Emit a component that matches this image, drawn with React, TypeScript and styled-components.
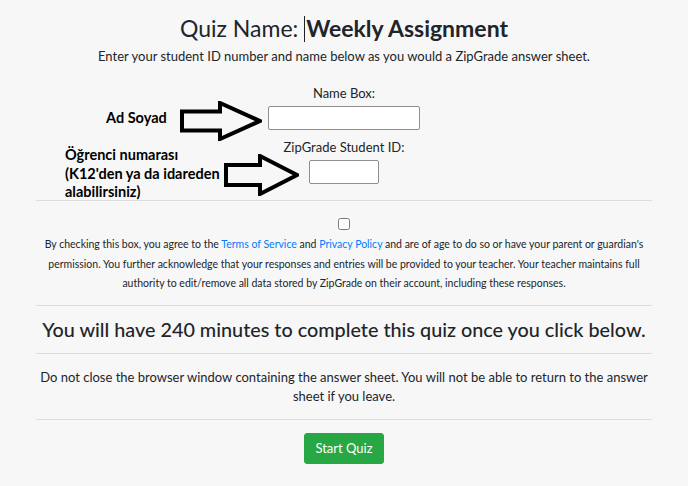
import styled, { createGlobalStyle } from 'styled-components';

const GlobalStyle = createGlobalStyle`
    body {
        margin: 0;
        background-color: #f7f7f7;
        font-family: Lato, 'Noto Sans', sans-serif;
        color: #212529;
    }
`;

const Arrow = ({ width, height, headStart }: { width: number; height: number; headStart: number }) => {
    const shaftTop = height * 0.26;
    const shaftBottom = height * 0.74;
    const mid = height / 2;
    return (
        <svg width={width} height={height} viewBox={`0 0 ${width} ${height}`}>
            <polygon
                points={`2,${shaftTop} ${headStart},${shaftTop} ${headStart},2 ${width - 2},${mid} ${headStart},${height - 2} ${headStart},${shaftBottom} 2,${shaftBottom}`}
                fill="none"
                stroke="#000"
                strokeWidth={4}
                strokeLinejoin="miter"
            />
        </svg>
    );
};

const App = () => {
    return (
        <>
            <GlobalStyle />
            <Page>
                <Container>
                    <Title>
                        Quiz Name: <Caret />
                        <strong>Weekly Assignment</strong>
                    </Title>
                    <Lead>Enter your student ID number and name below as you would a ZipGrade answer sheet.</Lead>

                    <FormBlock>
                        <FieldLabel>Name Box:</FieldLabel>
                        <TextInput $width={152} />
                        <FieldLabel $top={8}>ZipGrade Student ID:</FieldLabel>
                        <TextInput $width={70} />

                        {/* hand-drawn hints placed over the form */}
                        <Note $left={70} $top={43}>Ad Soyad</Note>
                        <ArrowSpot $left={144} $top={35}>
                            <Arrow width={82} height={40} headStart={40} />
                        </ArrowSpot>
                        <Note $left={29} $top={80}>
                            Öğrenci numarası
                            <br />
                            (K12'den ya da idareden
                            <br />
                            alabilirsiniz)
                        </Note>
                        <ArrowSpot $left={188} $top={88}>
                            <Arrow width={75} height={42} headStart={36} />
                        </ArrowSpot>
                    </FormBlock>

                    <Rule />

                    <Consent>
                        <CheckBox type="checkbox" />
                        <ConsentText>
                            By checking this box, you agree to the <Link href="#">Terms of Service</Link> and{' '}
                            <Link href="#">Privacy Policy</Link> and are of age to do so or have your parent or
                            guardian's permission. You further acknowledge that your responses and entries will be
                            provided to your teacher. Your teacher maintains full authority to edit/remove all data
                            stored by ZipGrade on their account, including these responses.
                        </ConsentText>
                    </Consent>

                    <Rule />
                    <TimeHeading>You will have 240 minutes to complete this quiz once you click below.</TimeHeading>
                    <Rule />
                    <Warning>
                        Do not close the browser window containing the answer sheet. You will not be able to return
                        to the answer sheet if you leave.
                    </Warning>
                    <Rule />

                    <ButtonRow>
                        <StartButton>Start Quiz</StartButton>
                    </ButtonRow>
                </Container>
            </Page>
        </>
    );
};

export default App;

const Page = styled.div`
    width: 100%;
    min-height: 486px;
    padding-top: 12px;
    box-sizing: border-box;
`;

const Container = styled.div`
    width: 616px;
    margin: 0 auto;
    text-align: center;
`;

const Title = styled.h2`
    margin: 0;
    font-size: 23px;
    font-weight: 400;
    line-height: 32px;

    strong {
        font-weight: 700;
    }
`;

const Caret = styled.span`
    display: inline-block;
    width: 1px;
    height: 26px;
    background: #222;
    vertical-align: -5px;
    margin-right: 1px;
`;

const Lead = styled.p`
    margin: 2px 0 0;
    font-size: 13px;
    line-height: 20px;
`;

const FormBlock = styled.div`
    position: relative;
    display: flex;
    flex-direction: column;
    align-items: center;
    padding-top: 18px;
    padding-bottom: 16px;
`;

const FieldLabel = styled.label<{ $top?: number }>`
    font-size: 13px;
    line-height: 18px;
    margin-top: ${(p) => p.$top ?? 0}px;
    margin-bottom: 4px;
`;

const TextInput = styled.input<{ $width: number }>`
    width: ${(p) => p.$width}px;
    height: 24px;
    box-sizing: border-box;
    border: 1px solid #8f8f8f;
    border-radius: 2px;
    background: #fff;
    margin: 0;
    padding: 0;
`;

const Note = styled.div<{ $left: number; $top: number }>`
    position: absolute;
    left: ${(p) => p.$left}px;
    top: ${(p) => p.$top}px;
    font-size: 14.5px;
    font-weight: 700;
    line-height: 18.5px;
    text-align: left;
    color: #000;
`;

const ArrowSpot = styled.div<{ $left: number; $top: number }>`
    position: absolute;
    left: ${(p) => p.$left}px;
    top: ${(p) => p.$top}px;
    line-height: 0;
`;

const Rule = styled.hr`
    margin: 0;
    border: 0;
    border-top: 1px solid #dcdcdc;
`;

const Consent = styled.div`
    display: flex;
    flex-direction: column;
    align-items: center;
    padding: 17px 0 11px;
`;

const CheckBox = styled.input`
    width: 12px;
    height: 12px;
    margin: 0 0 5px;
`;

const ConsentText = styled.p`
    margin: 0;
    font-size: 10.5px;
    line-height: 19.5px;
    color: #212529;
`;

const Link = styled.a`
    color: #007bff;
    text-decoration: none;
`;

const TimeHeading = styled.h4`
    margin: 0;
    padding: 11px 0 12px;
    font-size: 19.8px;
    font-weight: 500;
    line-height: 24px;
`;

const Warning = styled.p`
    margin: 0;
    padding: 14px 0 12px;
    font-size: 13px;
    line-height: 19.5px;
`;

const ButtonRow = styled.div`
    padding-top: 13px;
    display: flex;
    justify-content: center;
`;

const StartButton = styled.button`
    height: 31px;
    padding: 0 10px;
    background: #28a745;
    border: 1px solid #28a745;
    border-radius: 3px;
    color: #fff;
    font-family: Lato, 'Noto Sans', sans-serif;
    font-size: 13px;
`;
